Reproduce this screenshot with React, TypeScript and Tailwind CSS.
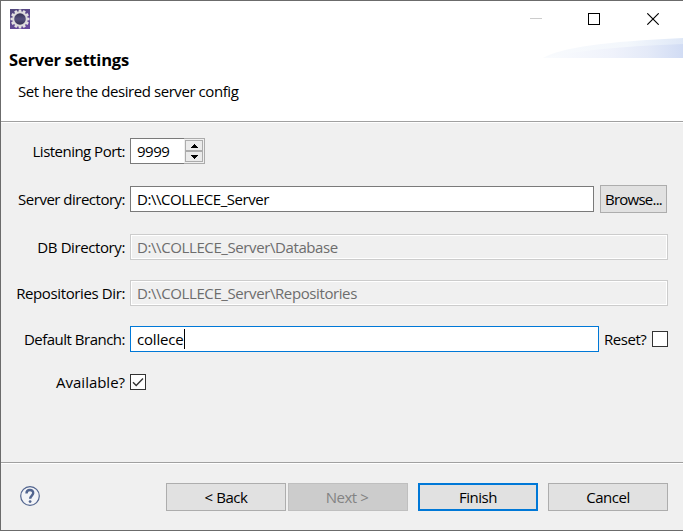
import type { ReactNode } from "react";

function Label({ children, className = "" }: { children: ReactNode; className?: string }) {
  return (
    <div className="flex w-[126px] shrink-0 items-center justify-end pr-px">
      <span className={`whitespace-nowrap ${className}`}>{children}</span>
    </div>
  );
}

function AppIcon() {
  const teeth = Array.from({ length: 12 }, (_, i) => i * 30);
  return (
    <svg width="20" height="20" viewBox="0 0 20 20">
      <defs>
        <linearGradient id="purple" x1="0" y1="0" x2="0.6" y2="1">
          <stop offset="0" stopColor="#51497a" />
          <stop offset="1" stopColor="#67499c" />
        </linearGradient>
        <linearGradient id="core" x1="0" y1="0" x2="0" y2="1">
          <stop offset="0" stopColor="#2f2b4b" />
          <stop offset="0.5" stopColor="#56517c" />
          <stop offset="1" stopColor="#302c4c" />
        </linearGradient>
      </defs>
      <rect width="20" height="20" fill="url(#purple)" />
      {teeth.map((a) => (
        <rect key={a} x="8.7" y="0.5" width="2.6" height="4" fill="#e4e2e2" transform={`rotate(${a} 10 10)`} />
      ))}
      <circle cx="10" cy="10" r="6.8" fill="url(#core)" stroke="#dddbdc" strokeWidth="2" />
    </svg>
  );
}

function Check({ checked }: { checked?: boolean }) {
  return (
    <div className="h-4 w-4 shrink-0 border border-[#333] bg-white">
      {checked && (
        <svg width="14" height="14" viewBox="0 0 14 14" fill="none" stroke="#333" strokeWidth="1.4">
          <path d="M2 7.2 5.2 10.4 12 3.5" />
        </svg>
      )}
    </div>
  );
}

function Spinner() {
  return (
    <div className="flex h-[26px] w-[21px] flex-col border border-l-0 border-[#ababab] bg-[#f0f0f0] py-px pl-px pr-px">
      <div className="flex h-[11px] items-center justify-center border border-[#acacac] bg-[#ebebeb]">
        <svg width="7" height="4" viewBox="0 0 7 4" shapeRendering="crispEdges">
          <path d="M3 0h1v1h1v1h1v1h1v1H0V3h1V2h1V1h1z" />
        </svg>
      </div>
      <div className="flex h-[11px] items-center justify-center border border-[#acacac] bg-[#ebebeb]">
        <svg width="7" height="4" viewBox="0 0 7 4" shapeRendering="crispEdges">
          <path d="M0 0h7v1H6v1H5v1H4v1H3V3H2V2H1V1H0z" />
        </svg>
      </div>
    </div>
  );
}

const btn = "flex h-7 w-[120px] items-center justify-center border border-[#adadad] bg-[#e1e1e1]";
const ro = "flex h-[26px] w-[538px] items-center border border-[#ccc] px-1.5 text-[#6d6d6d] shadow-[inset_0_0_0_1px_#fff]";

export default function App() {
  return (
    <div className="flex h-[531px] w-[683px] flex-col overflow-hidden border-y border-l border-[#6b6b6b] bg-[#f0f0f0] font-['Open_Sans',sans-serif] text-[15px] leading-5 tracking-[-0.46px] text-black">
      <header className="flex h-[120px] flex-col bg-white">
        <div className="flex h-9 items-center justify-between pl-[9px] pr-6">
          <AppIcon />
          <svg width="129" height="12" viewBox="0 0 129 12" fill="none" className="shrink-0">
            <path d="M0 5.5h12" stroke="#ccc" />
            <rect x="58.5" y="0.5" width="11" height="11" stroke="#000" />
            <path d="m117.3.3 11.4 11.4M128.7.3l-11.4 11.4" stroke="#000" strokeWidth="1.1" />
          </svg>
        </div>
        <div className="flex h-[42px] justify-between">
          <h1 className="mt-[11px] pl-2 text-[16.5px] font-bold leading-6 tracking-[-0.2px]">Server settings</h1>
          <svg width="141" height="21" viewBox="0 0 141 21">
            <defs>
              <linearGradient id="wave"><stop stopColor="#fafcfe" /><stop offset=".5" stopColor="#eff2fb" /><stop offset=".75" stopColor="#e4eaf8" /><stop offset="1" stopColor="#d1dcf4" /></linearGradient>
              <linearGradient id="haze"><stop stopColor="#f8fafd" /><stop offset=".6" stopColor="#f3f7fc" /><stop offset="1" stopColor="#dfe8f7" /></linearGradient>
            </defs>
            <path d="M1 21Q25 6 141 1V21Z" fill="url(#haze)" />
            <path d="M1 21Q50 10 141 7V21Z" fill="url(#wave)" />
          </svg>
        </div>
        <p className="mt-0.5 pl-[17px] tracking-[-0.43px]">Set here the desired server config</p>
      </header>
      <div className="h-0.5 border-t border-[#a0a0a0] bg-white" />
      <main className="flex h-[339px] flex-col pt-[15px] -ml-px">
        <div className="flex h-[26px] gap-1">
          <Label className="tracking-[-0.52px]">Listening Port:</Label>
          <div className="flex">
            <div className="flex w-[54px] items-center border border-r-0 border-[#7a7a7a] bg-white px-1.5">9999</div>
            <Spinner />
          </div>
        </div>
        <div className="mt-[21px] flex h-7 items-center gap-1">
          <Label className="tracking-[-0.5px]">Server directory:</Label>
          <div className="flex h-[26px] w-[464px] items-center border border-[#7a7a7a] bg-white px-1.5">{"D:\\\\COLLECE_Server"}</div>
          <button className="ml-0.5 flex h-7 w-[67px] items-center justify-center border border-[#adadad] bg-[#e1e1e1] tracking-[-0.75px]">Browse...</button>
        </div>
        <div className="mt-[21px] flex h-[26px] gap-1">
          <Label className="tracking-[-0.4px]">DB Directory:</Label>
          <div className={`${ro} tracking-[-0.4px]`}>{"D:\\\\COLLECE_Server\\Database"}</div>
        </div>
        <div className="mt-5 flex h-[26px] gap-1">
          <Label className="tracking-[-0.38px]">Repositories Dir:</Label>
          <div className={`${ro} tracking-[-0.4px]`}>{"D:\\\\COLLECE_Server\\Repositories"}</div>
        </div>
        <div className="mt-5 flex h-[26px] items-center gap-1">
          <Label className="tracking-[-0.5px]">Default Branch:</Label>
          <div className="flex h-[26px] w-[469px] items-center border border-[#0078d7] bg-white pl-1.5">
            <span className="w-[47px] tracking-[-0.2px]">collece</span>
            <span className="h-5 w-px bg-black" />
          </div>
          <span className="ml-px w-11 whitespace-nowrap">Reset?</span>
          <Check />
        </div>
        <div className="mt-[22px] flex h-4 items-center gap-1">
          <Label className="tracking-[-0.02px]">Available?</Label>
          <Check checked />
        </div>
      </main>
      <div className="h-0.5 border-t border-[#a0a0a0] bg-white" />
      <footer className="flex h-[66px] items-center justify-between pl-[19px] pr-[15px]">
        <svg width="20" height="20" viewBox="0 0 20 20" fill="none" stroke="#52658f" className="-mt-0.5">
          <circle cx="10" cy="10" r="9.3" fill="#f3f4f7" strokeWidth="1.2" />
          <path d="M6.5 7.4C6.5 2.8 13.5 2.9 13.2 7.2 13 9.5 10.2 9.8 10.2 12.8" strokeWidth="2.4" />
          <circle cx="10.1" cy="15.6" r="1.4" fill="#52658f" stroke="none" />
        </svg>
        <div className="flex">
          <button className={btn}>&lt; Back</button>
          <button className="ml-0.5 flex h-7 w-[120px] items-center justify-center border border-[#bfbfbf] bg-[#ccc] pr-0.5 text-[#838383]">Next &gt;</button>
          <button className="ml-2.5 flex h-7 w-[120px] items-center justify-center border-2 border-[#0078d7] bg-[#e1e1e1]">Finish</button>
          <button className={`${btn} ml-2.5`}>Cancel</button>
        </div>
      </footer>
    </div>
  );
}
